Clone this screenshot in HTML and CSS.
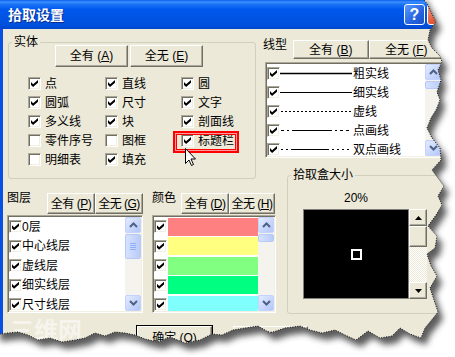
FILE: index.html
```html
<!DOCTYPE html>
<html lang="zh-CN">
<head>
    <meta charset="UTF-8">
    <title>拾取设置</title>
    <link rel="stylesheet" href="styles.css">
</head>
<body>
<div class="window">
    <div class="titlebar">
        <span class="title">拾取设置</span>
        <span class="help-btn">?</span>
        <span class="close-btn"></span>
    </div>
    <div class="body">
        <div class="top-row">
            <div class="group entity">
                <span class="group-title">实体</span>
                <div class="btn-row">
                    <button class="btn wide">全有 (<u>A</u>)</button>
                    <button class="btn wide">全无 (<u>E</u>)</button>
                </div>
                <div class="check-grid">
                    <label class="check"><span class="box on"></span>点</label>
                    <label class="check"><span class="box on"></span>直线</label>
                    <label class="check"><span class="box on"></span>圆</label>
                    <label class="check"><span class="box on"></span>圆弧</label>
                    <label class="check"><span class="box on"></span>尺寸</label>
                    <label class="check"><span class="box on"></span>文字</label>
                    <label class="check"><span class="box on"></span>多义线</label>
                    <label class="check"><span class="box on"></span>块</label>
                    <label class="check"><span class="box on"></span>剖面线</label>
                    <label class="check"><span class="box"></span>零件序号</label>
                    <label class="check"><span class="box"></span>图框</label>
                    <label class="check"><span class="box on"></span>标题栏</label>
                    <label class="check"><span class="box"></span>明细表</label>
                    <label class="check"><span class="box on"></span>填充</label>
                </div>
                <div class="highlight"></div>
                <svg class="cursor" width="12" height="19" viewBox="0 0 12 19">
                    <path d="M0.5 0.5 V15.5 L4 12 L6.5 17.5 L8.5 16.5 L6 11 H10.5 Z" fill="#fff" stroke="#000" stroke-width="1"/>
                </svg>
            </div>

            <div class="linetype">
                <div class="section-head">
                    <span class="section-label lt-label">线型</span>
                    <button class="btn lt-btn">全有 (<u>B</u>)</button>
                    <button class="btn lt-btn">全无 (<u>F</u>)</button>
                </div>
                <div class="listbox lt-list">
                    <div class="list-items">
                        <div class="list-row"><span class="box on"></span><svg class="line" width="72" height="3"><line x1="0" y1="1.5" x2="72" y2="1.5" stroke="#000" stroke-width="1.4"/></svg>粗实线</div>
                        <div class="list-row"><span class="box on"></span><svg class="line" width="72" height="3"><line x1="0" y1="1.5" x2="72" y2="1.5" stroke="#000" stroke-width="1"/></svg>细实线</div>
                        <div class="list-row"><span class="box on"></span><svg class="line" width="72" height="3"><line x1="1" y1="1.5" x2="72" y2="1.5" stroke="#000" stroke-width="1" stroke-dasharray="2 2"/></svg>虚线</div>
                        <div class="list-row"><span class="box on"></span><svg class="line" width="72" height="3"><line x1="1" y1="1.5" x2="72" y2="1.5" stroke="#000" stroke-width="1" stroke-dasharray="3 3 2 3 40 3 2 3 3 3"/></svg>点画线</div>
                        <div class="list-row"><span class="box on"></span><svg class="line" width="72" height="3"><line x1="1" y1="1.5" x2="72" y2="1.5" stroke="#000" stroke-width="1" stroke-dasharray="2 3 2 3 38 3 2 3 2 3 2 3"/></svg>双点画线</div>
                    </div>
                    <div class="vscroll">
                        <span class="sb-btn"><svg width="9" height="6" viewBox="0 0 9 6"><polyline points="1,5 4.5,1.5 8,5"/></svg></span>
                        <span class="sb-thumb short"></span>
                        <span class="sb-track"></span>
                        <span class="sb-btn"><svg width="9" height="6" viewBox="0 0 9 6"><polyline points="1,1 4.5,4.5 8,1"/></svg></span>
                    </div>
                </div>
            </div>
        </div>

        <div class="bottom-row">
            <div class="layer">
                <div class="section-head">
                    <span class="section-label layer-label">图层</span>
                    <button class="btn small">全有 (<u>P</u>)</button>
                    <button class="btn small">全无 (<u>G</u>)</button>
                </div>
                <div class="listbox low-list">
                    <div class="list-items">
                        <div class="list-row tall"><span class="box on"></span>0层</div>
                        <div class="list-row tall"><span class="box on"></span>中心线层</div>
                        <div class="list-row tall"><span class="box on"></span>虚线层</div>
                        <div class="list-row tall"><span class="box on"></span>细实线层</div>
                        <div class="list-row tall"><span class="box on"></span>尺寸线层</div>
                    </div>
                    <div class="vscroll thin">
                        <span class="sb-btn"><svg width="9" height="6" viewBox="0 0 9 6"><polyline points="1,5 4.5,1.5 8,5"/></svg></span>
                        <span class="sb-thumb grip"></span>
                        <span class="sb-track"></span>
                        <span class="sb-btn"><svg width="9" height="6" viewBox="0 0 9 6"><polyline points="1,1 4.5,4.5 8,1"/></svg></span>
                    </div>
                </div>
            </div>

            <div class="colors">
                <div class="section-head">
                    <span class="section-label color-label">颜色</span>
                    <button class="btn small">全有 (<u>D</u>)</button>
                    <button class="btn small narrow">全无 (<u>H</u>)</button>
                </div>
                <div class="listbox low-list color-list">
                    <div class="list-items">
                        <div class="list-row tall"><span class="box on"></span><span class="swatch red"></span></div>
                        <div class="list-row tall"><span class="box on"></span><span class="swatch yellow"></span></div>
                        <div class="list-row tall"><span class="box on"></span><span class="swatch green"></span></div>
                        <div class="list-row tall"><span class="box on"></span><span class="swatch spring"></span></div>
                        <div class="list-row tall"><span class="box on"></span><span class="swatch cyan"></span></div>
                    </div>
                    <div class="vscroll thin">
                        <span class="sb-btn"><svg width="9" height="6" viewBox="0 0 9 6"><polyline points="1,5 4.5,1.5 8,5"/></svg></span>
                        <span class="sb-thumb short"></span>
                        <span class="sb-track"></span>
                        <span class="sb-btn"><svg width="9" height="6" viewBox="0 0 9 6"><polyline points="1,1 4.5,4.5 8,1"/></svg></span>
                    </div>
                </div>
            </div>

            <div class="group pickbox">
                <span class="group-title">拾取盒大小</span>
                <div class="percent">20%</div>
                <div class="preview-row">
                    <div class="preview"><span class="pick-square"></span></div>
                    <div class="classic-scroll">
                        <span class="cs-btn"><svg width="7" height="4" viewBox="0 0 7 4"><path d="M0 4 L3.5 0 L7 4 Z"/></svg></span>
                        <span class="cs-thumb"></span>
                        <span class="cs-track"></span>
                        <span class="cs-btn"><svg width="7" height="4" viewBox="0 0 7 4"><path d="M0 0 L3.5 4 L7 0 Z"/></svg></span>
                    </div>
                </div>
            </div>
        </div>

        <div class="footer">
            <button class="btn action default">确定 (<u>O</u>)</button>
            <button class="btn action">取消 (<u>C</u>)</button>
        </div>
    </div>
</div>

<div class="watermark">三维网</div>

<svg class="tear" width="455" height="357" viewBox="0 0 455 357">
    <defs>
        <clipPath id="outside">
            <path clip-rule="evenodd" d="M-10 -10 H470 V370 H-10 Z M-5 -5 L424 -5 L424 0 L428 5 L431 12 L436 22 L430 30 L428 40 L432 48 L440 56 L442 62 L438 70 L441 80 L437 92 L440 100 L436 110 L431 118 L427 128 L432 138 L440 148 L441 160 L432 170 L438 178 L444 186 L438 196 L442 205 L436 215 L428 226 L437 236 L435 248 L427 254 L431 266 L437 276 L430 288 L434 300 L438 312 L430 322 L425 328 L421 338 L410 334 L400 328 L392 336 L380 338 L368 331 L356 340 L345 335 L335 330 L322 333 L310 330 L300 326 L285 328 L270 333 L258 326 L245 328 L233 330 L222 335 L212 334 L200 340 L185 343 L170 337 L158 342 L145 339 L135 335 L125 333 L115 332 L105 336 L95 333 L85 338 L75 340 L62 342 L50 338 L38 340 L28 335 L18 332 L8 333 L0 334 L-5 334 Z"/>
        </clipPath>
        <filter id="soft" x="-10%" y="-10%" width="120%" height="120%">
            <feGaussianBlur stdDeviation="3"/>
        </filter>
    </defs>
    <g clip-path="url(#outside)">
        <rect x="0" y="0" width="455" height="357" fill="#fff"/>
        <path transform="translate(5 7)" filter="url(#soft)" fill="#333" opacity="0.8" d="M-5 -5 L424 -5 L424 0 L428 5 L431 12 L436 22 L430 30 L428 40 L432 48 L440 56 L442 62 L438 70 L441 80 L437 92 L440 100 L436 110 L431 118 L427 128 L432 138 L440 148 L441 160 L432 170 L438 178 L444 186 L438 196 L442 205 L436 215 L428 226 L437 236 L435 248 L427 254 L431 266 L437 276 L430 288 L434 300 L438 312 L430 322 L425 328 L421 338 L410 334 L400 328 L392 336 L380 338 L368 331 L356 340 L345 335 L335 330 L322 333 L310 330 L300 326 L285 328 L270 333 L258 326 L245 328 L233 330 L222 335 L212 334 L200 340 L185 343 L170 337 L158 342 L145 339 L135 335 L125 333 L115 332 L105 336 L95 333 L85 338 L75 340 L62 342 L50 338 L38 340 L28 335 L18 332 L8 333 L0 334 L-5 334 Z"/>
    </g>
    <polyline fill="none" stroke="#111" stroke-width="1" stroke-dasharray="1 1.5" points="424,0 428,5 431,12 436,22 430,30 428,40 432,48 440,56 442,62 438,70 441,80 437,92 440,100 436,110 431,118 427,128 432,138 440,148 441,160 432,170 438,178 444,186 438,196 442,205 436,215 428,226 437,236 435,248 427,254 431,266 437,276 430,288 434,300 438,312 430,322 425,328 421,338 410,334 400,328 392,336 380,338 368,331 356,340 345,335 335,330 322,333 310,330 300,326 285,328 270,333 258,326 245,328 233,330 222,335 212,334 200,340 185,343 170,337 158,342 145,339 135,335 125,333 115,332 105,336 95,333 85,338 75,340 62,342 50,338 38,340 28,335 18,332 8,333 0,334"/>
</svg>
</body>
</html>
```

FILE: styles.css
```css
body {
    margin: 0;
    width: 455px;
    height: 357px;
    overflow: hidden;
    position: relative;
    background-color: #fff;
    font-family: "Liberation Sans", "Noto Sans CJK SC", sans-serif;
    font-size: 12px;
    color: #000;
}
.window {
    width: 455px;
    height: 357px;
    background-color: #ECE9D8;
}
.titlebar {
    height: 29px;
    display: flex;
    align-items: center;
    padding: 0 7px 0 8px;
    background: linear-gradient(180deg, #0A5FEF 0%, #3D8FFB 7%, #1A73F7 15%, #0058EE 32%, #0054E3 62%, #0050DD 86%, #0046CC 100%);
}
.title {
    color: #fff;
    font-weight: bold;
    font-size: 14px;
    line-height: 16px;
    text-shadow: 1px 1px 0 #0A2B8A;
}
.help-btn {
    margin-left: auto;
    width: 21px;
    height: 21px;
    box-sizing: border-box;
    border: 1px solid #fff;
    border-radius: 3px;
    background: linear-gradient(135deg, #5C9BFF 0%, #2663E0 60%, #1A50C8 100%);
    color: #fff;
    font: bold 16px/19px "Liberation Sans", sans-serif;
    text-align: center;
}
.close-btn {
    margin-left: 2px;
    width: 21px;
    height: 21px;
    box-sizing: border-box;
    border: 1px solid #fff;
    border-radius: 3px;
    background: linear-gradient(135deg, #F29B7C 0%, #E2583A 55%, #C8401E 100%);
}
.body {
    height: 328px;
    box-sizing: border-box;
    border-left: 3px solid #0650E6;
    padding-top: 11px;
}

/* buttons */
.btn {
    box-sizing: border-box;
    height: 22px;
    padding: 0;
    margin: 0;
    background-color: #ECE9D8;
    border: 1px solid;
    border-color: #fff #716F64 #716F64 #fff;
    box-shadow: inset -1px -1px 0 #ACA899;
    font-family: "Liberation Sans", "Noto Sans CJK SC", sans-serif;
    font-size: 12px;
    line-height: 18px;
    color: #000;
    white-space: nowrap;
}
.btn u {
    text-decoration: underline;
}
.btn.wide {
    width: 73px;
}
.lt-btn {
    width: 76px;
    height: 19px;
    line-height: 16px;
}
.btn.small {
    width: 48px;
    height: 21px;
    letter-spacing: -0.5px;
}
.btn.narrow {
    width: 46px;
}

/* group boxes */
.group {
    position: relative;
    box-sizing: border-box;
    border: 1px solid #D0D0BF;
    border-radius: 3px;
}
.group-title {
    position: absolute;
    top: -8px;
    left: 3px;
    padding: 0 2px;
    background-color: #ECE9D8;
    line-height: 14px;
}

/* check boxes */
.box {
    position: relative;
    display: inline-block;
    flex: none;
    width: 13px;
    height: 13px;
    box-sizing: border-box;
    background-color: #fff;
    border: 1px solid;
    border-color: #ACA899 #fff #fff #ACA899;
    box-shadow: inset 1px 1px 0 #716F64, inset -1px -1px 0 #F1EFE2;
}
.box.on::after {
    content: "";
    position: absolute;
    left: 2px;
    top: 2px;
    width: 7px;
    height: 7px;
    background-color: #000;
    clip-path: polygon(0% 30%, 30% 60%, 100% 0%, 100% 40%, 30% 100%, 0% 70%);
}

.top-row {
    display: flex;
    align-items: flex-start;
    height: 133px;
}
.entity {
    margin: 2px 0 0 5px;
    width: 248px;
    height: 137px;
    flex: none;
}
.btn-row {
    display: flex;
    gap: 2px;
    padding: 2px 0 0 46px;
}
.check-grid {
    display: grid;
    grid-template-columns: 77px 76px 1fr;
    grid-auto-rows: 19px;
    margin-top: 7px;
    padding-left: 19px;
}
.check {
    display: flex;
    align-items: center;
    gap: 4px;
    line-height: 14px;
}
.highlight {
    position: absolute;
    left: 164px;
    top: 88px;
    width: 66px;
    height: 22px;
    box-sizing: border-box;
    border: 2px solid #F00;
    box-shadow: inset 0 0 0 1px #FF9A9A, inset 0 0 0 2px #F00;
}
.cursor {
    position: absolute;
    left: 176px;
    top: 105px;
}

/* line type list */
.linetype {
    margin-left: 7px;
    width: 181px;
    flex: none;
}
.section-head {
    display: flex;
    align-items: flex-start;
}
.section-label {
    flex: none;
    line-height: 14px;
    margin-top: -2px;
}
.lt-label {
    width: 30px;
}
.layer-label {
    width: 40px;
}
.color-label {
    width: 29px;
}
.listbox {
    display: flex;
    box-sizing: border-box;
    background-color: #fff;
    border: 1px solid;
    border-color: #ACA899 #fff #fff #ACA899;
    box-shadow: inset 1px 1px 0 #716F64, inset -1px -1px 0 #F1EFE2;
    padding: 1px;
    overflow: hidden;
}
.lt-list {
    margin: 3px 0 0 2px;
    width: 179px;
    height: 96px;
}
.list-items {
    flex: 1;
    overflow: hidden;
}
.list-row {
    display: flex;
    align-items: center;
    height: 19px;
    line-height: 14px;
    white-space: nowrap;
}
.list-row.tall {
    height: 19.5px;
}
.line {
    flex: none;
    margin: 0 1px 0 0;
}

/* xp scroll bars */
.vscroll {
    flex: none;
    width: 17px;
    display: flex;
    flex-direction: column;
    background-color: #F4F3EE;
}
.vscroll.thin {
    width: 16px;
}
.sb-btn {
    height: 16px;
    box-sizing: border-box;
    display: flex;
    align-items: center;
    justify-content: center;
    border: 1px solid #C3D3FD;
    border-radius: 2px;
    background: linear-gradient(135deg, #E3EBFE 0%, #C6D5FC 60%, #B2C6F6 100%);
}
.sb-btn svg polyline {
    fill: none;
    stroke: #4D6185;
    stroke-width: 2;
}
.sb-thumb {
    margin-top: 1px;
    box-sizing: border-box;
    border: 1px solid #B7CAF5;
    border-radius: 2px;
    background: linear-gradient(90deg, #D6E2FD 0%, #C5D4FC 60%, #B8CBF8 100%);
}
.sb-thumb.short {
    height: 8px;
}
.sb-thumb.grip {
    height: 25px;
    position: relative;
}
.sb-thumb.grip::after {
    content: "";
    position: absolute;
    left: 4px;
    right: 4px;
    top: 8px;
    height: 7px;
    background: repeating-linear-gradient(180deg, #8CB0F8 0 1px, transparent 1px 2px);
}
.sb-track {
    flex: 1;
}

/* bottom row */
.bottom-row {
    display: flex;
    align-items: flex-start;
}
.layer {
    margin: 20px 0 0 4px;
    width: 136px;
    flex: none;
}
.colors {
    margin: 20px 0 0 9px;
    width: 124px;
    flex: none;
}
.low-list {
    margin-top: 1px;
    height: 98px;
}
.layer .low-list {
    width: 136px;
}
.color-list {
    width: 124px;
}
.swatch {
    margin-left: 1px;
    width: 92px;
    height: 18px;
    flex: none;
}
.swatch.red { background-color: #FF8080; }
.swatch.yellow { background-color: #FFFF80; }
.swatch.green { background-color: #80FF80; }
.swatch.spring { background-color: #00FF80; }
.swatch.cyan { background-color: #80FFFF; }

/* pick box size */
.pickbox {
    margin: 2px 0 0 11px;
    width: 160px;
    height: 139px;
    flex: none;
    padding: 15px 0 0 15px;
}
.percent {
    width: 106px;
    text-align: center;
    line-height: 14px;
}
.preview-row {
    display: flex;
    margin-top: 4px;
}
.preview {
    width: 106px;
    height: 90px;
    box-sizing: border-box;
    border: 1px solid #808080;
    background-color: #000;
    display: flex;
    align-items: center;
    justify-content: center;
}
.pick-square {
    width: 11px;
    height: 11px;
    box-sizing: border-box;
    border: 2px solid #fff;
}
.classic-scroll {
    width: 18px;
    height: 90px;
    display: flex;
    flex-direction: column;
    background: repeating-conic-gradient(#fff 0 25%, #ECE9D8 0 50%) 0 0 / 2px 2px;
}
.cs-btn,
.cs-thumb {
    box-sizing: border-box;
    background-color: #ECE9D8;
    border: 1px solid;
    border-color: #fff #716F64 #716F64 #fff;
    box-shadow: inset -1px -1px 0 #ACA899;
}
.cs-btn {
    height: 17px;
    display: flex;
    align-items: center;
    justify-content: center;
}
.cs-thumb {
    height: 21px;
}
.cs-track {
    flex: 1;
}

/* footer */
.footer {
    display: flex;
    gap: 21px;
    margin-top: 12px;
    padding-left: 134px;
}
.btn.action {
    width: 75px;
    height: 23px;
}
.btn.default {
    outline: 1px solid #000;
}

.watermark {
    position: absolute;
    left: 10px;
    top: 317px;
    font-size: 24px;
    font-weight: bold;
    line-height: 24px;
    color: rgba(255, 255, 255, 0.55);
    font-family: "Noto Sans CJK SC", sans-serif;
}
.tear {
    position: absolute;
    left: 0;
    top: 0;
    pointer-events: none;
}
```
